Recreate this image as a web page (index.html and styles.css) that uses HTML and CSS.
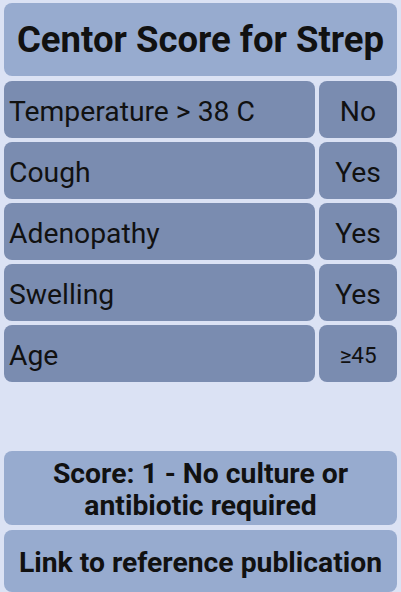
FILE: index.html
```html
<!DOCTYPE html>
<html lang="en">
<head>
    <meta charset="UTF-8">
    <meta name="viewport" content="width=device-width, initial-scale=1.0">
    <title>Centor Score</title>
    <link rel="stylesheet" href="styles.css">
</head>
<body>
    <div class="app">
        <div class="title">Centor Score for Strep</div>
        <div class="rows">
            <div class="label">Temperature &gt; 38 C</div>
            <div class="value">No</div>
            <div class="label">Cough</div>
            <div class="value">Yes</div>
            <div class="label">Adenopathy</div>
            <div class="value">Yes</div>
            <div class="label">Swelling</div>
            <div class="value">Yes</div>
            <div class="label">Age</div>
            <div class="value small">&ge;45</div>
        </div>
        <div class="result">Score: 1 - No culture or antibiotic required</div>
        <div class="link">Link to reference publication</div>
    </div>
</body>
</html>
```

FILE: styles.css
```css
body {
    margin: 0;
    background-color: #dbe2f4;
    font-family: Roboto, "Noto Sans", sans-serif;
    color: #111;
}
.app {
    padding: 3px 4px 0;
    display: flex;
    flex-direction: column;
}
.title {
    background-color: #97abcf;
    border-radius: 8px;
    height: 73px;
    display: flex;
    align-items: center;
    justify-content: center;
    font-size: 36.5px;
    font-weight: bold;
    white-space: nowrap;
}
.rows {
    margin-top: 5px;
    display: grid;
    grid-template-columns: 1fr 78px;
    grid-auto-rows: 57px;
    gap: 4px;
}
.label,
.value {
    background-color: #7a8cb0;
    border-radius: 8px;
    display: flex;
    align-items: center;
    font-size: 28.3px;
    padding-top: 3px;
    box-sizing: border-box;
}
.label {
    padding-left: 5px;
}
.value {
    justify-content: center;
}
.value.small {
    font-size: 22.5px;
}
.result,
.link {
    background-color: #97abcf;
    border-radius: 8px;
    display: flex;
    align-items: center;
    justify-content: center;
    text-align: center;
    font-size: 28.3px;
    font-weight: bold;
    line-height: 32px;
    white-space: nowrap;
    box-sizing: border-box;
    padding-top: 3px;
}
.result {
    margin-top: 69px;
    height: 74px;
    white-space: normal;
    padding-left: 40px;
    padding-right: 40px;
}
.link {
    margin-top: 5px;
    height: 62px;
}
```
